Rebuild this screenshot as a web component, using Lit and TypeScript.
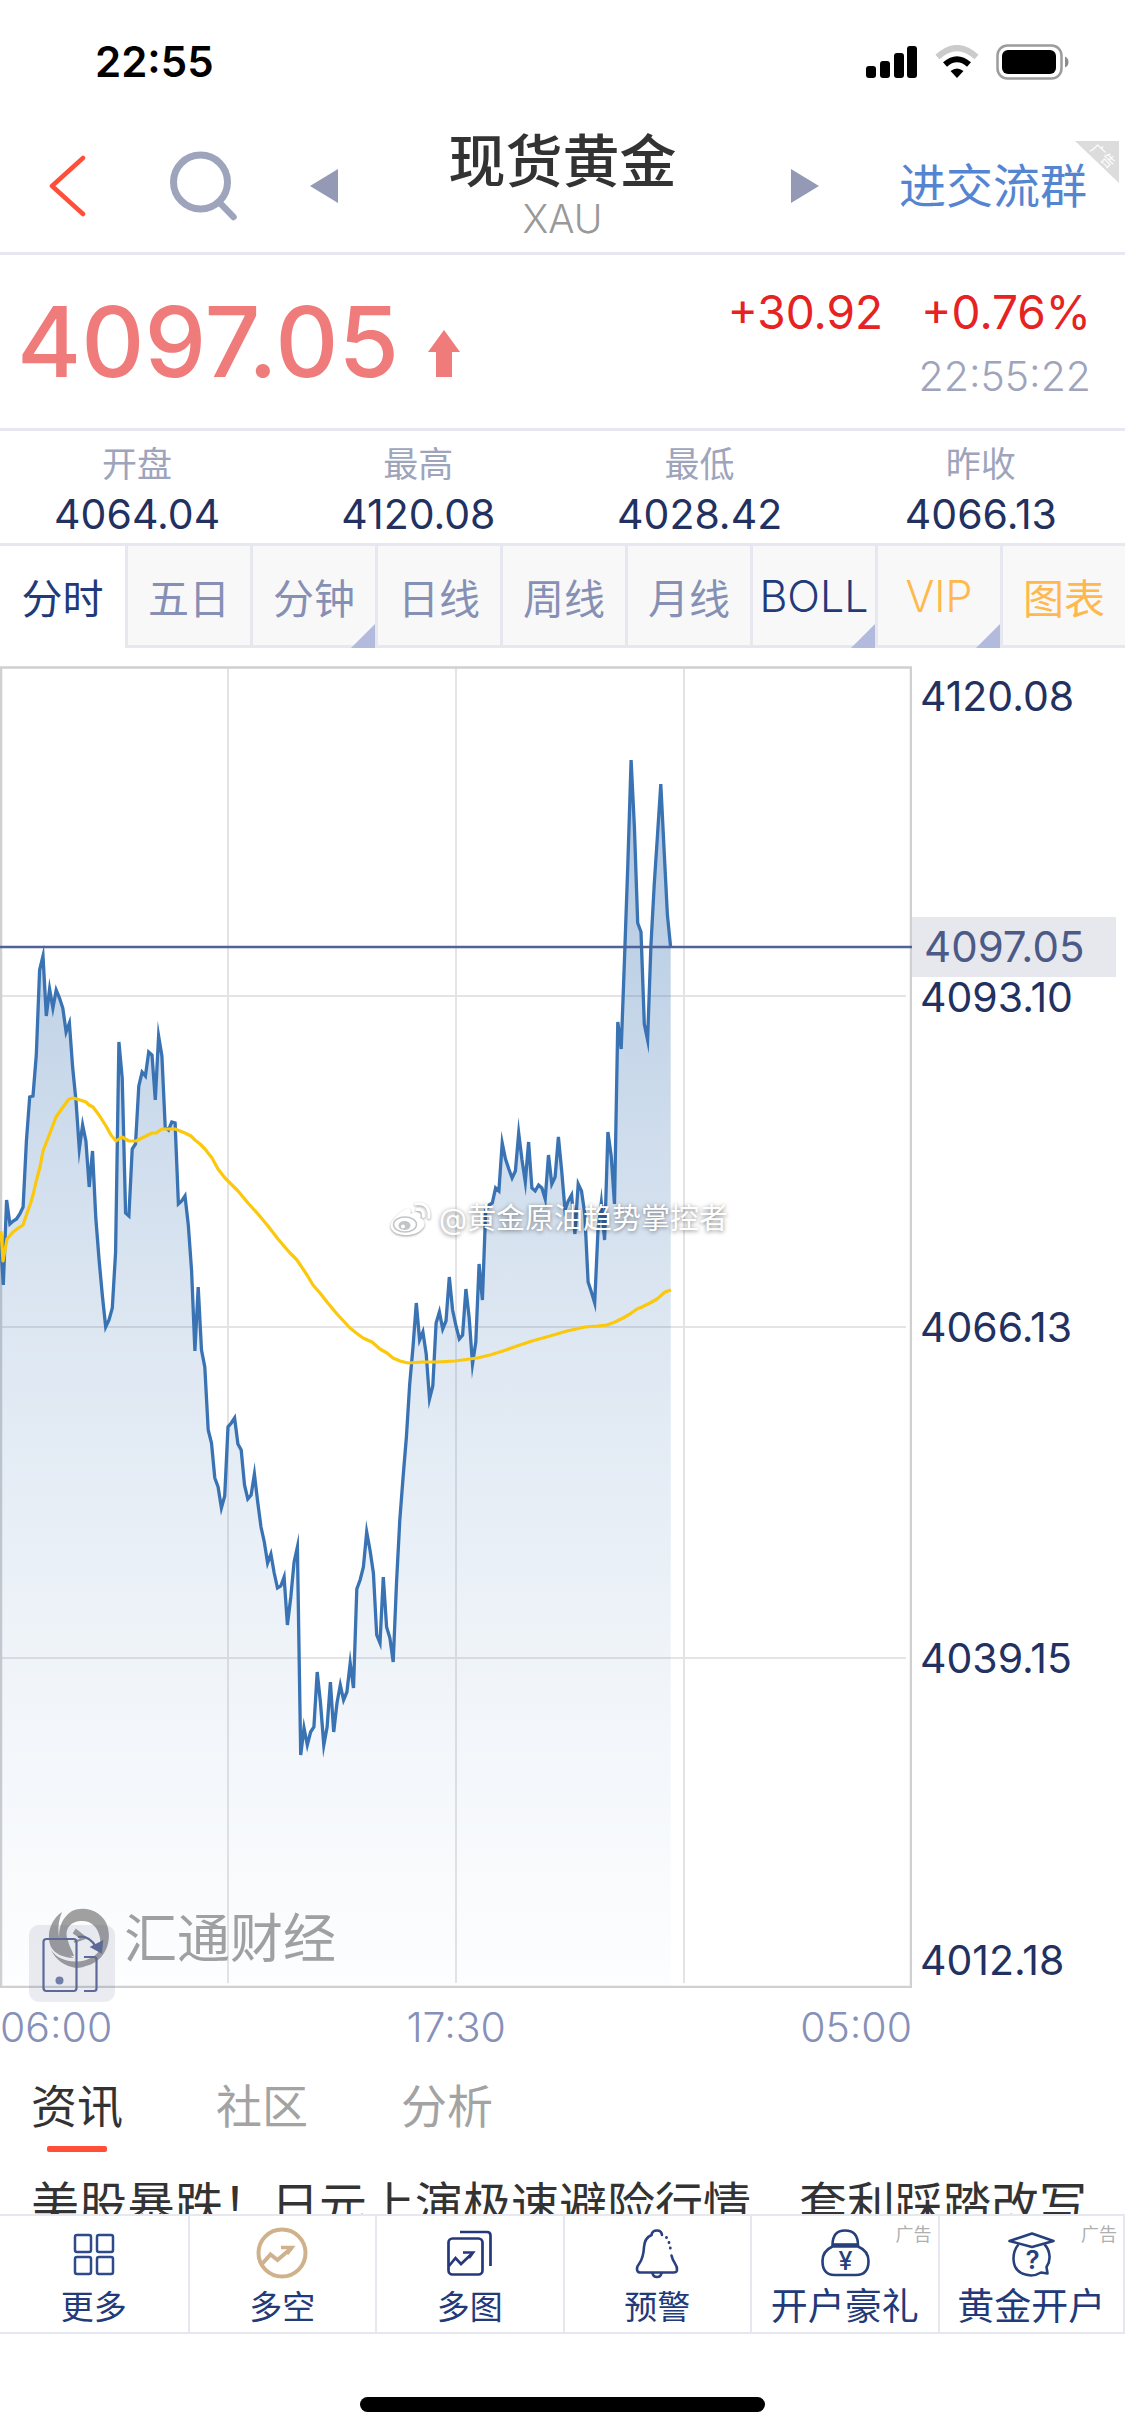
import { LitElement, html, svg, css, nothing } from "lit";
import { customElement, state } from "lit/decorators.js";
import { classMap } from "lit/directives/class-map.js";

/* Plot space: 912 wide, vertical range 666 to 1988, one sample every STEP units. */
const STEP = 3.304;
const PRICE: number[] = [
  1233, 1285, 1200, 1224, 1221, 1219, 1214, 1207, 1141, 1097, 1096, 1055, 970, 956, 1016, 989, 1008, 990, 998, 1008,
  1032, 1023, 1068, 1101, 1149, 1125, 1141, 1187, 1151, 1218, 1260, 1296, 1327, 1320, 1308, 1252, 1042, 1078, 1213, 1216,
  1149, 1144, 1086, 1072, 1076, 1052, 1055, 1100, 1036, 1056, 1127, 1130, 1122, 1123, 1204, 1201, 1196, 1225, 1271, 1351,
  1287, 1350, 1367, 1430, 1443, 1478, 1487, 1508, 1496, 1427, 1423, 1418, 1444, 1450, 1485, 1499, 1495, 1474, 1502, 1527,
  1542, 1563, 1554, 1573, 1588, 1586, 1577, 1625, 1597, 1562, 1547, 1755, 1728, 1745, 1732, 1727, 1672, 1703, 1745, 1727,
  1682, 1732, 1703, 1685, 1700, 1692, 1663, 1688, 1589, 1580, 1567, 1532, 1550, 1573, 1635, 1643, 1577, 1627, 1638, 1662,
  1583, 1520, 1477, 1437, 1384, 1347, 1303, 1340, 1332, 1354, 1399, 1386, 1323, 1312, 1329, 1321, 1277, 1310, 1326, 1339,
  1335, 1289, 1318, 1364, 1342, 1264, 1300, 1210, 1205, 1203, 1188, 1191, 1143, 1159, 1169, 1178, 1171, 1133, 1160, 1182,
  1142, 1188, 1191, 1185, 1188, 1199, 1155, 1184, 1177, 1137, 1171, 1210, 1201, 1195, 1234, 1184, 1191, 1214, 1282, 1292,
  1303, 1230, 1203, 1240, 1132, 1156, 1204, 1022, 1049, 959, 865, 760, 827, 923, 932, 1024, 1040, 946, 885, 835,
  784, 850, 915, 948,
];
const AVERAGE: [number, number][] = [
  [1, 1231], [3, 1261], [7, 1239], [13, 1232], [17, 1229], [23, 1225], [26, 1216], [30, 1205], [33, 1195], [36, 1182],
  [40, 1167], [43, 1151], [50, 1133], [56, 1117], [63, 1107], [69, 1099], [73, 1098], [80, 1100], [86, 1102], [89, 1105],
  [93, 1107], [99, 1115], [106, 1126], [111, 1135], [116, 1141], [122, 1137], [129, 1141], [136, 1141], [142, 1138],
  [152, 1133], [156, 1133], [162, 1129], [175, 1129], [185, 1133], [191, 1136], [195, 1140], [200, 1144], [205, 1149],
  [212, 1158], [218, 1169], [225, 1178], [228, 1181], [238, 1191], [248, 1203], [258, 1214], [268, 1226], [278, 1239],
  [290, 1253], [297, 1260], [307, 1275], [313, 1285], [320, 1293], [327, 1302], [337, 1314], [350, 1328], [355, 1332],
  [363, 1338], [372, 1342], [380, 1349], [387, 1353], [393, 1358], [400, 1361], [408, 1363], [423, 1362], [437, 1362],
  [455, 1361], [477, 1358], [490, 1355], [503, 1351], [517, 1346], [532, 1341], [550, 1336], [567, 1331], [585, 1327],
  [598, 1326], [607, 1325], [615, 1322], [623, 1318], [630, 1314], [637, 1309], [642, 1307], [650, 1303], [657, 1299],
  [665, 1292], [671, 1290],
];

const line = PRICE.map((y, i) => `${(i * STEP).toFixed(1)},${y}`).join(" ");
const lastX = ((PRICE.length - 1) * STEP).toFixed(1);
const average = AVERAGE.map((p) => p.join(",")).join(" ");

const STATS = [
  ["开盘", "4064.04"],
  ["最高", "4120.08"],
  ["最低", "4028.42"],
  ["昨收", "4066.13"],
];

const PERIODS = [
  { label: "分时" },
  { label: "五日" },
  { label: "分钟", menu: true },
  { label: "日线" },
  { label: "周线" },
  { label: "月线" },
  { label: "BOLL", menu: true, tone: "navy", latin: true },
  { label: "VIP", menu: true, tone: "gold", latin: true },
  { label: "图表", tone: "gold" },
];

const moreIcon = svg`<g stroke="#2f4a8a" stroke-width="2.5">
  <rect x="8" y="9" width="16" height="17" rx="2"/><rect x="30" y="9" width="16" height="17" rx="2"/>
  <rect x="8" y="31" width="16" height="17" rx="2"/><rect x="30" y="31" width="16" height="17" rx="2"/></g>`;
const trendIcon = svg`<g stroke="#cfb28c" stroke-width="4">
  <circle cx="27" cy="27" r="23.5"/><path d="M7 38 L15.500 28.500 L22.500 34 L36.500 22"/><path d="M26 21.500 H37 L32 28" stroke-width="3.500"/></g>`;
const multiIcon = svg`<g stroke="#26387c" stroke-width="2.700">
  <rect x="5.500" y="12.500" width="34" height="36" rx="4"/><path d="M17 6 H44 Q47.500 6 47.500 9.500 V40"/>
  <path d="M6 40 L12.500 32 L18 38 L28.500 28"/><path d="M20 26.500 H30 L26 32"/></g>`;
const bellIcon = svg`<g stroke="#2a4080" stroke-width="2.600" stroke-linecap="round">
  <path d="M32 9 Q31.500 4.500 27 4.500 Q22 4.500 21.500 9 Q14.500 12 14 21 Q13.500 32 9 38 Q6 42 7.500 45 Q8 46.500 10.500 46.500 H43.500 Q46.500 46.500 47 44.500 Q47.500 41 45 37.500 Q42.500 34 41.500 29.500"/>
  <path d="M36.500 11.500 v.2 M39 16.500 v.2 M40.300 22 v.2" stroke-width="2.800"/><path d="M22.500 47 Q23 51 27 51 Q31 51 31.500 47"/></g>`;
const bagIcon = svg`<g stroke="#26407c" stroke-width="2.600">
  <path d="M14.500 19 Q14.500 4.500 27 4.500 Q40 4.500 40 19 Z"/><path d="M14.500 20.500 H40 Q50.500 25 50.500 35 Q50.500 49 38 49 H16.500 Q4.500 49 4.500 35 Q4.500 25 14.500 20.500 Z"/>
  <path d="M14 19 H40.500" stroke-width="3.500"/></g>
  <text x="27.500" y="44" text-anchor="middle" font-size="25" font-weight="500" fill="#26407c">¥</text>`;
const capIcon = svg`<g stroke="#26407c" stroke-width="2.600" stroke-linejoin="round">
  <path d="M5.500 15 L28 7.500 L49.500 15 L28 21 Z"/>
  <path d="M14.500 18.500 Q9.500 24 9.500 33 Q10 48.500 27 49.500 Q32 49.500 37 46.500 L43.500 47.500 L42.500 41 Q46 36 45.500 30 Q45 23 40.500 18.500"/></g>
  <text x="28.500" y="43" text-anchor="middle" font-size="26" font-weight="600" fill="#26407c">?</text>`;

const TOOLS = [
  { label: "更多", icon: moreIcon },
  { label: "多空", icon: trendIcon },
  { label: "多图", icon: multiIcon },
  { label: "预警", icon: bellIcon },
  { label: "开户豪礼", icon: bagIcon, ad: true },
  { label: "黄金开户", icon: capIcon, ad: true },
];

const reset = css`
  button {
    appearance: none;
    border: 0;
    padding: 0;
    margin: 0;
    background: none;
    font: inherit;
    color: inherit;
    cursor: pointer;
  }
  a {
    color: inherit;
    text-decoration: none;
  }
  svg {
    display: block;
    flex: none;
  }
`;

@customElement("status-bar")
export class StatusBar extends LitElement {
  static styles = css`
    :host {
      display: flex;
      align-items: center;
      justify-content: space-between;
      height: 120px;
      padding: 3px 56px 0 95px;
      box-sizing: border-box;
      color: #000;
    }
    .clock {
      font-size: 42px;
      font-weight: 600;
    }
    .icons {
      display: flex;
      align-items: center;
      gap: 17px;
    }
    svg {
      display: block;
    }
  `;
  render() {
    return html`
      <span class="clock">22:55</span>
      <div class="icons">
        <svg width="52" height="34" viewBox="0 0 52 34" aria-hidden="true">
          <rect x="0" y="21" width="10" height="12" rx="3" /><rect x="14" y="16" width="10" height="17" rx="3" />
          <rect x="28" y="8" width="10" height="25" rx="3" /><rect x="41" y="1" width="10" height="32" rx="3" />
        </svg>
        <svg width="44" height="34" viewBox="0 0 44 34" fill="none" aria-hidden="true">
          <path d="M2.500 12 Q22 -6 41.500 12" stroke="#cbcbcb" stroke-width="6" />
          <path d="M10 19.500 Q22 9 34 19.500" stroke="#000" stroke-width="6" />
          <path d="M15.500 26 Q22 21 28.500 26 L22 33 Z" fill="#000" />
        </svg>
        <svg width="73" height="36" viewBox="0 0 73 36" aria-hidden="true">
          <rect x="1.500" y="1.500" width="64" height="33" rx="10" fill="none" stroke="#9c9c9c" stroke-width="2.500" />
          <rect x="6" y="6" width="54" height="24" rx="6" />
          <path d="M69 12.500 Q72.500 14 72.500 18 Q72.500 22 69 23.500 Z" fill="#8c8c8c" />
        </svg>
      </div>
    `;
  }
}

@customElement("quote-header")
export class QuoteHeader extends LitElement {
  static styles = [
    reset,
    css`
      :host {
        display: grid;
        grid-template-columns: 1fr auto 1fr;
        align-items: center;
        height: 135px;
        box-sizing: border-box;
        border-bottom: 3px solid #e7e8ef;
        position: relative;
      }
      .left,
      .right {
        display: flex;
        align-items: center;
      }
      .left {
        padding-left: 48px;
      }
      .search {
        margin-left: 84px;
      }
      .prev {
        margin-left: 70px;
      }
      .right {
        justify-content: space-between;
        padding: 0 38px 0 114px;
      }
      .name {
        margin: 0;
        font-size: 57px;
        line-height: 66px;
        font-weight: 500;
        color: #333;
      }
      .title {
        text-align: center;
      }
      .code {
        font-size: 39px;
        line-height: 48px;
        font-weight: 300;
        color: #999;
      }
      .group {
        font-size: 47px;
        line-height: 60px;
        color: #5585d0;
      }
      .ad {
        position: absolute;
        top: 21px;
        right: 6px;
      }
    `,
  ];
  render() {
    return html`
      <div class="left">
        <button aria-label="返回">
          <svg width="38" height="62" viewBox="0 0 38 62" fill="none">
            <path d="M35 3 L4 31 L35 59" stroke="#ff4f38" stroke-width="4.500" stroke-linecap="round" stroke-linejoin="round" />
          </svg>
        </button>
        <button class="search" aria-label="搜索">
          <svg width="70" height="70" viewBox="0 0 70 70" fill="none" stroke="#9ea4bc">
            <circle cx="30.500" cy="31" r="27" stroke-width="7" />
            <path d="M50 52 L63.500 66" stroke-width="6.500" stroke-linecap="round" />
          </svg>
        </button>
        <button class="prev" aria-label="上一个">
          <svg width="28" height="34" viewBox="0 0 28 34"><path d="M0 17 L28 0 V34 Z" fill="#949ab5" /></svg>
        </button>
      </div>
      <div class="title">
        <h1 class="name">现货黄金</h1>
        <div class="code">XAU</div>
      </div>
      <div class="right">
        <button aria-label="下一个">
          <svg width="28" height="34" viewBox="0 0 28 34"><path d="M28 17 L0 0 V34 Z" fill="#949ab5" /></svg>
        </button>
        <a class="group" href="#group">进交流群</a>
      </div>
      <svg class="ad" width="44" height="42" viewBox="0 0 44 42" aria-hidden="true">
        <path d="M0 0 H44 V42 Z" fill="#dcdcdc" />
        <text x="28" y="20" transform="rotate(44 28 15)" text-anchor="middle" font-size="14" fill="#fff">广告</text>
      </svg>
    `;
  }
}

@customElement("quote-summary")
export class QuoteSummary extends LitElement {
  static styles = [
    reset,
    css`
      :host {
        display: block;
      }
      .quote {
        display: flex;
        justify-content: space-between;
        align-items: center;
        height: 176px;
        box-sizing: border-box;
        padding: 0 34px 0 17px;
        border-bottom: 3px solid #e7e8ef;
      }
      .price {
        display: flex;
        align-items: baseline;
        gap: 29px;
        font-size: 98px;
        line-height: 120px;
        font-weight: 500;
        color: #f07b7b;
      }
      .change {
        display: grid;
        grid-template-columns: auto auto;
        column-gap: 38px;
        padding-top: 4px;
        font-size: 46px;
        line-height: 64px;
        color: #e62222;
        text-align: right;
      }
      .time {
        grid-column: 1 / -1;
        font-size: 41px;
        font-weight: 300;
        color: #9ea4bc;
      }
      .stats {
        display: grid;
        grid-template-columns: repeat(4, 1fr);
        align-content: center;
        margin: 0;
        height: 115px;
        box-sizing: border-box;
        padding-top: 3px;
        border-bottom: 3px solid #e7e8ef;
      }
      .stat {
        padding-right: 7px;
        text-align: center;
        line-height: 50px;
      }
      .stat-name {
        font-size: 35px;
        color: #9ea4bc;
      }
      .stat-value {
        margin: 0;
        font-size: 41px;
        color: #22315f;
      }
    `,
  ];
  render() {
    return html`
      <div class="quote">
        <div class="price">
          <span>4097.05</span>
          <svg width="32" height="47" viewBox="0 0 32 47" aria-hidden="true">
            <path d="M16 0 L32 22 H24 V47 H8 V22 H0 Z" fill="#f07b7b" />
          </svg>
        </div>
        <div class="change">
          <span>+30.92</span><span>+0.76%</span>
          <time class="time">22:55:22</time>
        </div>
      </div>
      <dl class="stats">
        ${STATS.map(
          ([name, value]) => html`<div class="stat">
            <dt class="stat-name">${name}</dt>
            <dd class="stat-value">${value}</dd>
          </div>`
        )}
      </dl>
    `;
  }
}

@customElement("period-tabs")
export class PeriodTabs extends LitElement {
  @state() private active = 0;
  static styles = [
    reset,
    css`
      :host {
        display: grid;
        grid-template-columns: repeat(9, 1fr);
        height: 102px;
      }
      .tab {
        position: relative;
        box-sizing: border-box;
        border-left: 3px solid #e7e8ef;
        border-bottom: 3px solid #e7e8ef;
        background: #f8f8f8;
        color: #8690b5;
        font-size: 41px;
        white-space: nowrap;
      }
      .tab:first-child {
        border-left: 0;
      }
      .latin {
        font-size: 43px;
        font-weight: 300;
      }
      .navy {
        color: #223a7a;
      }
      .gold {
        color: #ffb84d;
      }
      .active {
        background: #fff;
        border-bottom-color: #fff;
        color: #223a7a;
      }
      .corner {
        position: absolute;
        right: 0;
        bottom: -3px;
      }
    `,
  ];
  render() {
    return PERIODS.map(
      (p, i) => html`<button
        class=${classMap({
          tab: true,
          active: i === this.active,
          latin: !!p.latin,
          navy: p.tone === "navy",
          gold: p.tone === "gold",
        })}
        @click=${() => (this.active = i)}
      >
        ${p.label}
        ${p.menu
          ? html`<svg class="corner" width="24" height="24" viewBox="0 0 24 24"><path d="M24 0 V24 H0 Z" fill="#b2bbdd" /></svg>`
          : nothing}
      </button>`
    );
  }
}

@customElement("price-chart")
export class PriceChart extends LitElement {
  static styles = [
    reset,
    css`
      :host {
        display: grid;
        grid-template-columns: 912fr 213fr;
        padding-top: 18px;
      }
      .plot {
        position: relative;
      }
      .canvas {
        width: 100%;
        height: auto;
      }
      .axis {
        position: relative;
        display: grid;
        grid-template-rows: 1fr 2fr 2fr 2fr 1fr;
        align-items: center;
        padding-left: 8px;
        font-size: 41px;
        line-height: 50px;
        color: #22315f;
      }
      .axis span:first-child {
        align-self: start;
        padding-top: 5px;
      }
      .axis span:nth-child(5) {
        align-self: end;
        padding-bottom: 3px;
      }
      .badge {
        position: absolute;
        top: 19%;
        left: 0;
        right: 9px;
        padding-left: 12px;
        font-size: 42px;
        line-height: 60px;
        background: #e6e8ee;
        color: #4c5a87;
      }
      .times {
        display: flex;
        justify-content: space-between;
        font-size: 41px;
        line-height: 78px;
        font-weight: 300;
        color: #8690b8;
      }
      .brand {
        position: absolute;
        left: 48px;
        bottom: 16px;
        display: flex;
        align-items: center;
        gap: 14px;
        font-size: 53px;
        line-height: 66px;
        color: #a0a0a0;
      }
      .rotate {
        position: absolute;
        left: 29px;
        bottom: -14px;
      }
      .watermark {
        position: absolute;
        left: 389px;
        top: 533px;
        display: flex;
        align-items: center;
        gap: 6px;
        font-size: 29px;
        line-height: 40px;
        white-space: nowrap;
        color: #fff;
        text-shadow: 0 1px 4px rgba(0, 0, 0, 0.5);
      }
      .weibo {
        filter: drop-shadow(0 1px 1px rgba(0, 0, 0, 0.4));
      }
    `,
  ];
  render() {
    return html`
      <div class="plot">
        <svg class="canvas" viewBox="0 666 912 1322" fill="none" role="img" aria-label="XAU 分时图">
          <defs>
            <linearGradient id="fade" gradientUnits="userSpaceOnUse" x1="0" y1="760" x2="0" y2="1988">
              <stop offset="0" stop-color="#3a73b3" stop-opacity="0.42" />
              <stop offset="0.2" stop-color="#3a73b3" stop-opacity="0.3" />
              <stop offset="0.44" stop-color="#3a73b3" stop-opacity="0.18" />
              <stop offset="0.76" stop-color="#3a73b3" stop-opacity="0.07" />
              <stop offset="1" stop-color="#3a73b3" stop-opacity="0.01" />
            </linearGradient>
          </defs>
          <path d="M228 668 V1983 M456 668 V1983 M684 668 V1983 M2 996 H906 M2 1327 H906 M2 1658 H906" stroke="#e4e4e6" stroke-width="2" />
          <rect x="1" y="667.500" width="910" height="1319.500" stroke="#cfd0d2" stroke-width="2.500" />
          <polygon points="0,1987 ${line} ${lastX},1987" fill="url(#fade)" />
          <polyline points=${line} stroke="#3a73b3" stroke-width="3.300" stroke-miterlimit="10" />
          <polyline points=${average} stroke="#fbc80c" stroke-width="3.200" stroke-linejoin="round" />
          <path d="M0 947 H912" stroke="#4f629c" stroke-width="2.500" />
        </svg>
        <div class="brand">
          <svg width="62" height="62" viewBox="0 0 62 62" fill="#a0a0a0" aria-hidden="true">
            <path fill-rule="evenodd" d="M15 44 C8 30 10 12 24 3 C38 -3 56 4 60 20 C64 38 54 54 38 58 C48 50 54 42 52 30 C50 18 42 12 32 13 C20 14 16 24 20 33 C22 40 25 44 26 48 C21 48 17 47 15 44 Z" />
            <path d="M14 4 C2 12 -2 28 3 39 C7 46 16 50 26 50 C14 44 5 26 14 4 Z" />
            <path d="M3 42 C10 52 24 56 38 52 C44 50 48 47 52 42 C48 54 38 60 28 60 C16 58 8 52 3 42 Z" />
            <path d="M28 22 L38 30 L26 34 L34 31 L26 25 Z" stroke="#a0a0a0" stroke-width="2" />
          </svg>
          <span>汇通财经</span>
        </div>
        <button class="rotate" aria-label="横屏">
          <svg width="86" height="77" viewBox="0 0 86 77" fill="none" stroke="#5d6a98" stroke-width="2.200">
            <rect width="86" height="77" rx="10" fill="#5a6488" fill-opacity="0.120" stroke="none" />
            <rect x="14.500" y="14" width="33" height="52" rx="3" />
            <path d="M55 32 H65 Q67.500 32 67.500 34.500 V63.500 Q67.500 66 65 66 H55" />
            <circle cx="30.500" cy="55.500" r="4" fill="#717ea8" stroke="none" />
            <path d="M49 12 Q60 10 67 22" />
            <path d="M73 17 L72 27 L63 22 Z" fill="#5d6a98" />
          </svg>
        </button>
        <div class="watermark">
          <svg class="weibo" width="44" height="36" viewBox="0 0 44 36" fill="none" aria-hidden="true">
            <path d="M15 9 C20 5 23 8 21.500 13 C28 9.500 33 12 31 17 C36 19 37 24 33 28 C28 34 17 35.500 9 33 C1 30 0 24 4 19 C7 15 10 12 15 9 Z" fill="#fff" />
            <ellipse cx="16" cy="23.500" rx="11.500" ry="7.500" stroke="#c2c4c8" stroke-width="1.500" />
            <ellipse cx="15.500" cy="24.500" rx="6" ry="4.500" fill="#c2c4c8" />
            <circle cx="14" cy="25.500" r="2" fill="#fff" />
            <path d="M28 8.500 Q35 8 34.500 15.500 M27 3 Q41 1.500 40 16.500" stroke="#fff" stroke-width="3" stroke-linecap="round" />
          </svg>
          <span>@黄金原油趋势掌控者</span>
        </div>
      </div>
      <div class="axis">
        <span>4120.08</span><span>4093.10</span><span>4066.13</span><span>4039.15</span><span>4012.18</span>
        <div class="badge">4097.05</div>
      </div>
      <div class="times"><span>06:00</span><span>17:30</span><span>05:00</span></div>
    `;
  }
}

@customElement("news-panel")
export class NewsPanel extends LitElement {
  @state() private active = 0;
  static styles = [
    reset,
    css`
      :host {
        display: block;
        color: #333;
      }
      .tabs {
        display: flex;
        gap: 93px;
        padding-left: 31px;
      }
      .tab {
        display: flex;
        flex-direction: column;
        align-items: center;
        font-size: 46px;
        line-height: 80px;
        color: #a3a3a3;
      }
      .active {
        color: #333;
      }
      .bar {
        width: 60px;
        height: 6px;
        border-radius: 2px;
      }
      .active .bar {
        background: #ff4f38;
      }
      .feed {
        height: 62px;
        box-sizing: border-box;
        padding: 20px 0 0 31px;
        overflow: hidden;
        font-size: 48px;
        line-height: 66px;
        white-space: nowrap;
      }
    `,
  ];
  render() {
    return html`
      <nav class="tabs">
        ${["资讯", "社区", "分析"].map(
          (t, i) => html`<button class=${classMap({ tab: true, active: i === this.active })} @click=${() => (this.active = i)}>
            <span>${t}</span><span class="bar"></span>
          </button>`
        )}
      </nav>
      <div class="feed"><a href="#news">美股暴跌！日元上演极速避险行情　套利踩踏改写</a></div>
    `;
  }
}

@customElement("tool-bar")
export class ToolBar extends LitElement {
  static styles = [
    reset,
    css`
      :host {
        display: grid;
        grid-template-columns: repeat(6, 1fr);
        border-top: 2px solid #e7e8ef;
        border-bottom: 2px solid #e7e8ef;
        background: #fff;
      }
      .tool {
        position: relative;
        display: flex;
        flex-direction: column;
        align-items: center;
        gap: 5px;
        height: 116px;
        padding-top: 10px;
        box-sizing: border-box;
        border-left: 2px solid #e7e8ef;
        color: #223a7a;
        font-size: 33px;
        line-height: 44px;
        white-space: nowrap;
      }
      .tool:first-child {
        border-left: 0;
      }
      .tool:last-child {
        border-right: 2px solid #e7e8ef;
      }
      .wide {
        font-size: 37px;
      }
      .ad {
        position: absolute;
        top: 8px;
        right: 6px;
        font-size: 18px;
        line-height: 22px;
        color: #b0b0b0;
      }
    `,
  ];
  render() {
    return TOOLS.map(
      (t) => html`<button class=${classMap({ tool: true, wide: !!t.ad })}>
        <svg width="54" height="54" viewBox="0 0 54 54" fill="none" aria-hidden="true">${t.icon}</svg>
        <span>${t.label}</span>
        ${t.ad ? html`<span class="ad">广告</span>` : nothing}
      </button>`
    );
  }
}

@customElement("app-root")
export class AppRoot extends LitElement {
  static styles = css`
    :host {
      display: block;
      min-height: 100vh;
      background: #fff;
      font-family: Inter, "Noto Sans CJK SC", sans-serif;
    }
    .home {
      display: flex;
      justify-content: center;
      padding: 63px 0 24px;
    }
    .handle {
      width: 36%;
      height: 15px;
      border-radius: 8px;
      background: #000;
    }
  `;
  render() {
    return html`
      <status-bar></status-bar>
      <quote-header></quote-header>
      <quote-summary></quote-summary>
      <period-tabs></period-tabs>
      <price-chart></price-chart>
      <news-panel></news-panel>
      <tool-bar></tool-bar>
      <div class="home"><div class="handle"></div></div>
    `;
  }
}
